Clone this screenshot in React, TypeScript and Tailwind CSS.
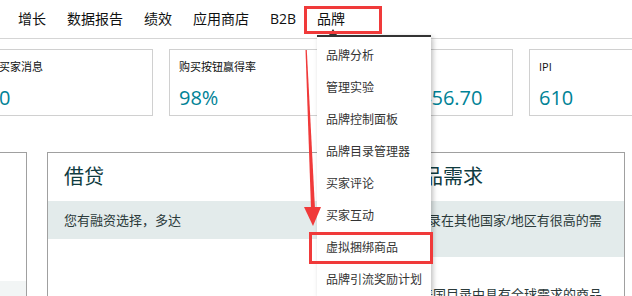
import React from 'react';

const navItems = ['增长', '数据报告', '绩效', '应用商店', 'B2B', '品牌'];

const menuItems = [
  '品牌分析',
  '管理实验',
  '品牌控制面板',
  '品牌目录管理器',
  '买家评论',
  '买家互动',
  '虚拟捆绑商品',
  '品牌引流奖励计划',
];

const stats = [
  { label: '买家消息', value: '0', pad: 'pl-[9px]' },
  { label: '购买按钮赢得率', value: '98%', pad: 'pl-[9px]' },
  { label: '今日销售额', value: 'US$12,456.70', pad: 'pl-[5px]' },
  { label: 'IPI', value: '610', pad: 'pl-[9px]' },
];

function StatCard({ label, value, pad }: { label: string; value: string; pad: string }) {
  return (
    <div className={`w-[164px] h-[67px] shrink-0 border border-[#d0d0d0] pt-[9px] ${pad}`}>
      <div className="text-[11px] leading-[16px] text-[#0f1111] whitespace-nowrap">{label}</div>
      <div className="mt-[11px] text-[20px] leading-[24px] text-[#008296] whitespace-nowrap">{value}</div>
    </div>
  );
}

export default function App() {
  return (
    <div
      className="relative w-[632px] h-[296px] overflow-hidden bg-white"
      style={{ fontFamily: '"Open Sans", "Noto Sans CJK SC", sans-serif' }}
    >
      {/* Top navigation */}
      <nav className="flex h-[39px] items-center gap-[21px] pl-[18px] pb-[2px] border-b border-[#d5d5d5] text-[14px] text-[#0f1111]">
        {navItems.map((item) => (
          <span key={item} className="whitespace-nowrap">
            {item}
          </span>
        ))}
      </nav>

      {/* Metric cards */}
      <div className="flex gap-4 mt-[10px] ml-[-11px]">
        {stats.map((s) => (
          <StatCard key={s.label} label={s.label} value={s.value} pad={s.pad} />
        ))}
      </div>

      {/* Widget panels */}
      <div className="flex gap-[20px] mt-[36px] ml-[-252px] items-start">
        <div className="w-[279px] h-[200px] shrink-0 border border-[#a0a0a0]">
          <div className="h-[128px]" />
          <div className="h-[70px] bg-[#f2f5f5]" />
        </div>

        <div className="w-[279px] h-[200px] shrink-0 border border-[#a0a0a0]">
          <div className="h-[48px] flex items-center px-4 text-[20px] text-[#0f3b3f]">借贷</div>
          <div className="bg-[#e3ebeb] py-[10px] px-4 text-[13px] leading-[18px] text-[#2b3a3a]">
            您有融资选择，多达
          </div>
          <div className="mt-[51px] pl-[49px] text-[23px] font-semibold leading-[28px] text-[#8a9c9c]">11</div>
        </div>

        <div className="w-[279px] h-[200px] shrink-0 border border-[#a0a0a0]">
          <div className="h-[48px] flex items-center px-4 text-[20px] text-[#0f3b3f] whitespace-nowrap">全球商品需求</div>
          <div className="bg-[#e3ebeb] py-[10px] pl-4 pr-4 text-[13px] leading-[18px] text-[#2b3a3a]">
            您的商品目录在其他国家/地区有很高的需求
          </div>
          <div className="mt-[28px] pl-[21px] text-[13px] leading-[18px] text-[#2b3a3a] whitespace-nowrap">
            以下是您美国目录中具有全球需求的商品
          </div>
        </div>
      </div>

      {/* Dropdown caret */}
      <div className="absolute left-[329px] top-[29px] w-0 h-0 border-l-[4px] border-r-[4px] border-b-[6px] border-l-transparent border-r-transparent border-b-[#333]" />

      {/* Brand dropdown menu */}
      <div className="absolute left-[317px] top-[35px] w-[114px] bg-white border-t-[2px] border-[#333] pt-[3px] shadow-[2px_2px_5px_rgba(0,0,0,0.25)]">
        {menuItems.map((item) => (
          <div key={item} className="h-8 flex items-center pl-[9px] text-[12px] text-[#333] whitespace-nowrap">
            {item}
          </div>
        ))}
      </div>

      {/* Annotation: red boxes */}
      <div className="absolute left-[304px] top-[6px] w-[78px] h-[28px] border-[3px] border-[#f03a3a]" />
      <div className="absolute left-[309px] top-[232px] w-[124px] h-[32px] border-[3px] border-[#f03a3a]" />

      {/* Annotation: red arrow */}
      <svg className="absolute left-0 top-0" width="632" height="296" viewBox="0 0 632 296">
        <polygon points="305.5,50 306.8,50 315,209 311,209" fill="#f03a3a" />
        <polygon points="304,207 321,207 313,226" fill="#f03a3a" />
      </svg>
    </div>
  );
}
